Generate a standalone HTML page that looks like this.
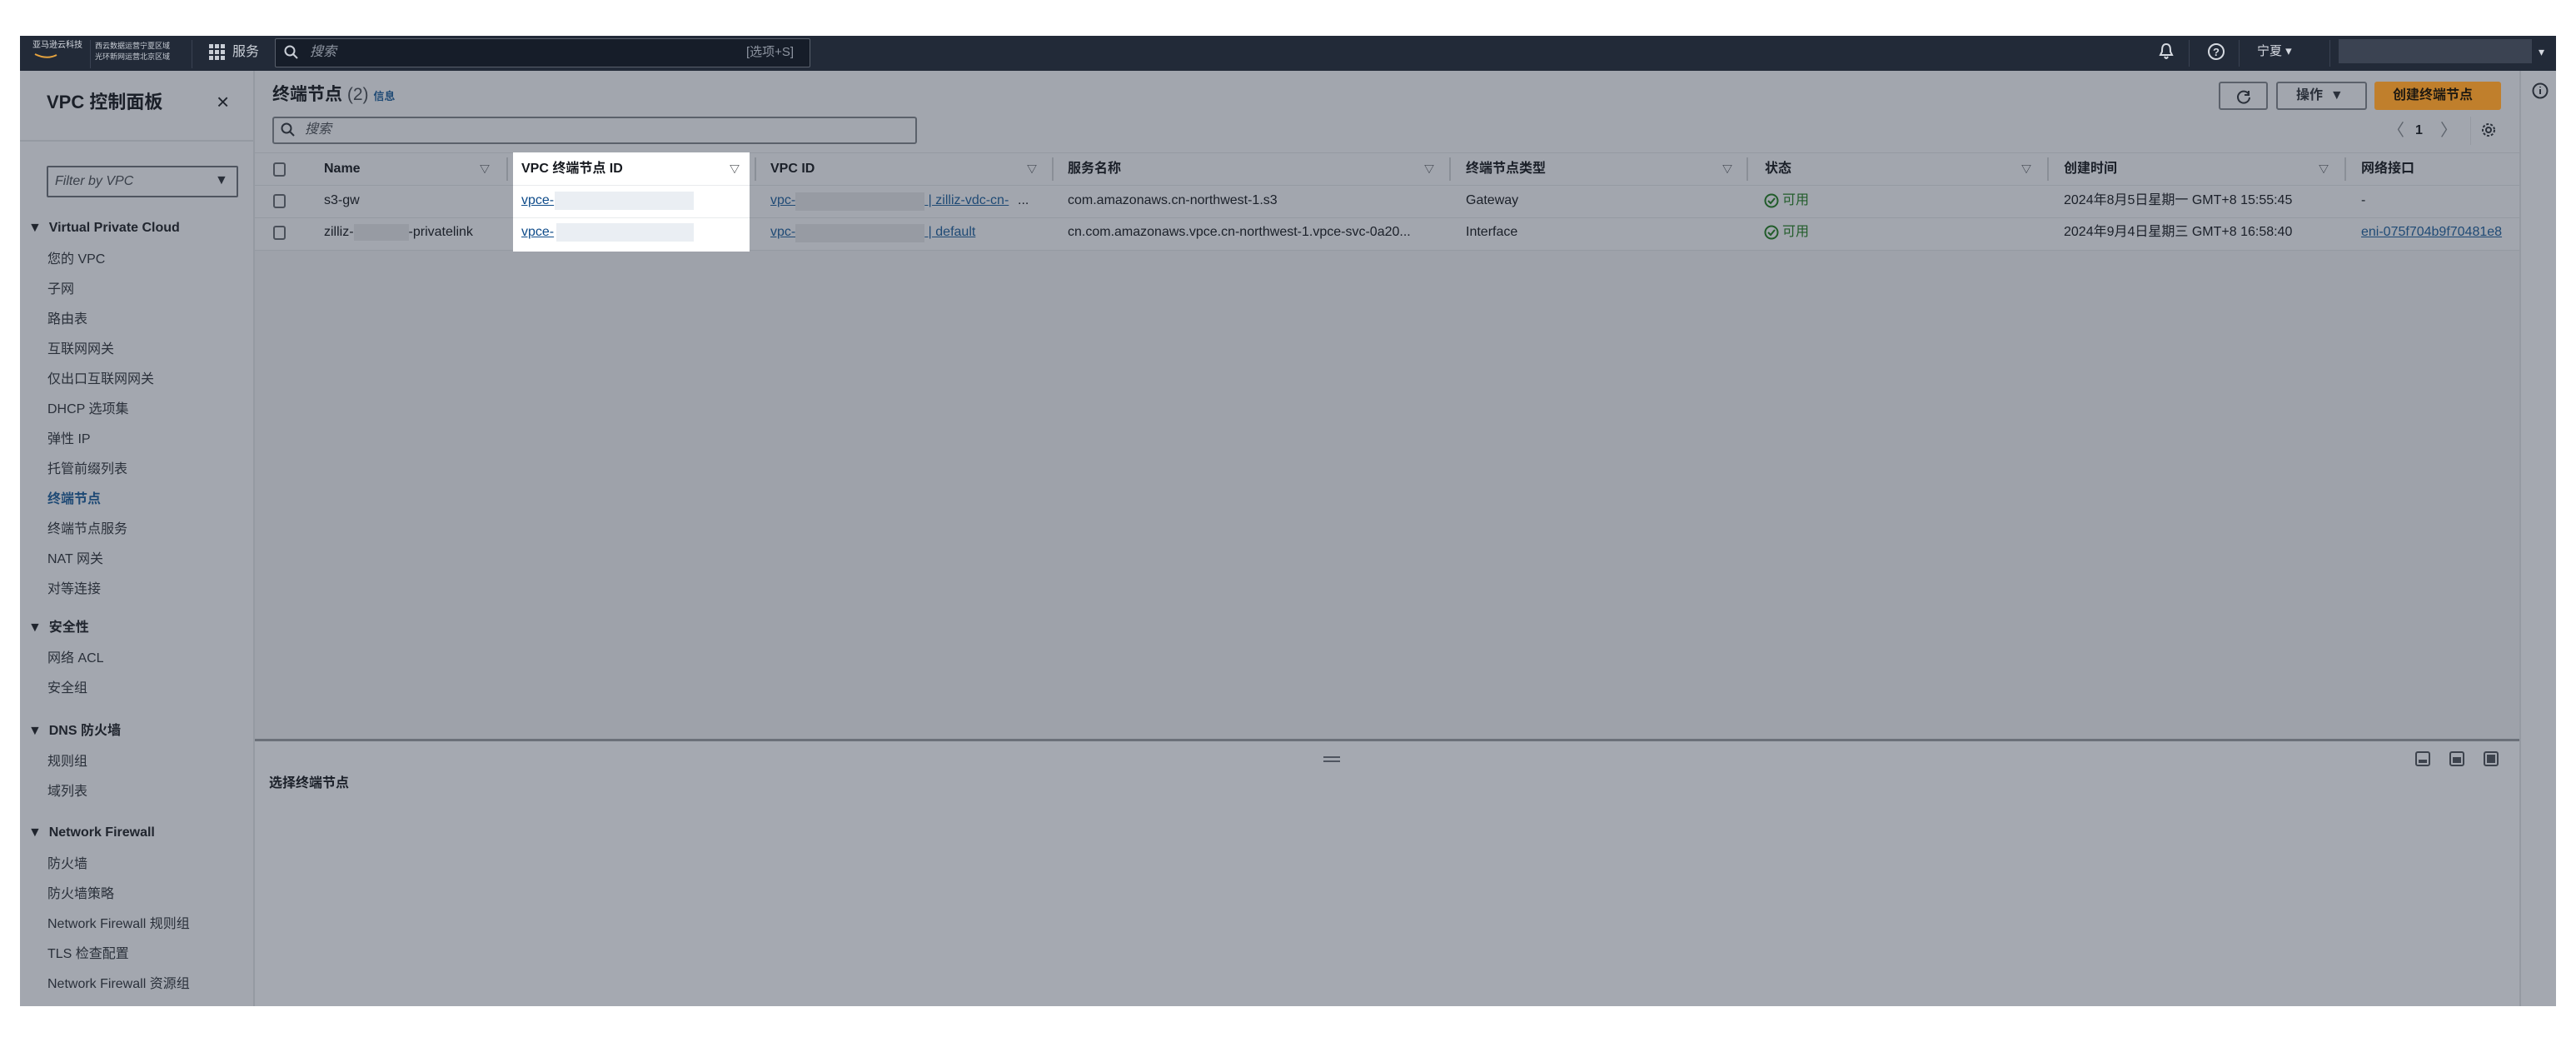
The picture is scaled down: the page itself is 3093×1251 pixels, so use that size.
<!DOCTYPE html>
<html><head><meta charset="utf-8"><style>
*{margin:0;padding:0;box-sizing:border-box}
body{width:3093px;height:1251px;background:#fff;position:relative;overflow:hidden;font-family:"Liberation Sans","Noto Sans CJK SC",sans-serif;color:#1b2029;font-size:16px;line-height:20px}
.a{position:absolute;white-space:nowrap;line-height:20px}
.nav{left:24px;top:43px;width:3045px;height:42px;background:#222a38}
.side{left:24px;top:85px;width:282px;height:1123px;background:#a3a7af;border-right:2px solid #959aa2}
.main{left:306px;top:85px;width:2719px;height:805px;background:#a2a6ae}
.empty{left:306px;top:300px;width:2719px;height:588px;background:#9ea2aa}
.split{left:306px;top:887px;width:2719px;height:3px;background:#6b7079}
.bot{left:306px;top:890px;width:2719px;height:318px;background:#a5a9b1}
.rstrip{left:3025px;top:85px;width:44px;height:1123px;background:#a4a8b0;border-left:2px solid #959aa2}
.si{left:57px;font-size:16px;color:#2a303a}
.sh{left:34px;font-size:16px;font-weight:bold;color:#20252e}
.th{font-size:16px;font-weight:bold;top:193px}
.td{font-size:16px}
.lk{color:#1f4a75;text-decoration:underline}
.fi{font-size:12px;top:193px;color:#2a303a}
.dv{width:2px;height:28px;top:189px;background:#8a8f97}
.rl{height:1px;background:#959aa2;left:306px;width:2719px}
.cb{width:15px;height:17px;border:2px solid #4a505a;border-radius:3px;left:328px}
</style></head><body>
<div class="a nav"></div>
<div class="a" style="left:39px;top:49px;color:#d5d9e0;font-size:10px;line-height:12px">亚马逊云科技</div>
<svg class="a" style="left:40px;top:63px" width="36" height="10"><path d="M2 2 Q16 9 28 3" stroke="#e6a33e" stroke-width="2" fill="none"/></svg>
<div class="a" style="left:108px;top:48px;width:1px;height:34px;background:#3a4252"></div>
<div class="a" style="left:114px;top:49px;color:#c7ccd4;font-size:9px;line-height:13px">西云数据运营宁夏区域<br>光环新网运营北京区域</div>
<div class="a" style="left:230px;top:48px;width:1px;height:34px;background:#3a4252"></div>
<svg class="a" style="left:251px;top:53px" width="20" height="20" fill="#c9ced6"><rect x="0" y="0" width="5" height="5"/><rect x="7" y="0" width="5" height="5"/><rect x="14" y="0" width="5" height="5"/><rect x="0" y="7" width="5" height="5"/><rect x="7" y="7" width="5" height="5"/><rect x="14" y="7" width="5" height="5"/><rect x="0" y="14" width="5" height="5"/><rect x="7" y="14" width="5" height="5"/><rect x="14" y="14" width="5" height="5"/></svg>
<div class="a" style="left:279px;top:53px;color:#c9ced6;font-size:16px">服务</div>
<div class="a" style="left:330px;top:46px;width:643px;height:35px;background:#161d29;border:1px solid #59606c;border-radius:2px"></div>
<svg class="a" style="left:341px;top:54px" width="18" height="18"><circle cx="7" cy="7" r="5.5" stroke="#c9ced6" stroke-width="2" fill="none"/><path d="M11 11 L16 16" stroke="#c9ced6" stroke-width="2"/></svg>
<div class="a" style="left:372px;top:53px;color:#8e95a1;font-size:16px;font-style:italic">搜索</div>
<div class="a" style="left:896px;top:53px;color:#8e95a1;font-size:15px">[选项+S]</div>
<svg class="a" style="left:2591px;top:51px" width="20" height="22"><path d="M10 2 C5 2 5 7 5 11 L3 15 L17 15 L15 11 C15 7 15 2 10 2 Z M8 17 Q10 21 12 17" stroke="#d5d9e0" stroke-width="2" fill="none"/></svg>
<div class="a" style="left:2628px;top:48px;width:1px;height:32px;background:#3a4252"></div>
<svg class="a" style="left:2650px;top:51px" width="22" height="22"><circle cx="11" cy="11" r="9" stroke="#d5d9e0" stroke-width="2" fill="none"/><text x="11" y="16" font-size="13" text-anchor="middle" fill="#d5d9e0" font-family="Liberation Sans" font-weight="bold">?</text></svg>
<div class="a" style="left:2688px;top:48px;width:1px;height:32px;background:#3a4252"></div>
<div class="a" style="left:2710px;top:52px;color:#d5d9e0;font-size:15px">宁夏 ▾</div>
<div class="a" style="left:2797px;top:48px;width:1px;height:32px;background:#3a4252"></div>
<div class="a" style="left:2808px;top:47px;width:232px;height:29px;background:#3b4352"></div>
<div class="a" style="left:3048px;top:52px;color:#d5d9e0;font-size:14px">▾</div>

<div class="a side"></div>
<div class="a main"></div>
<div class="a empty"></div>
<div class="a split"></div>
<div class="a bot"></div>
<div class="a rstrip"></div>

<div class="a" style="left:56px;top:110px;font-size:22px;line-height:26px;font-weight:bold;color:#1b2029">VPC 控制面板</div>
<div class="a" style="left:260px;top:108px;font-size:26px;line-height:28px;color:#20252e">×</div>
<div class="a" style="left:24px;top:168px;width:282px;height:2px;background:#959aa2"></div>
<div class="a" style="left:56px;top:199px;width:230px;height:38px;border:2px solid #4f5560;border-radius:2px"></div>
<div class="a" style="left:66px;top:208px;font-size:16px;font-style:italic;color:#3a404a">Filter by VPC</div>
<div class="a" style="left:258px;top:207px;font-size:16px;color:#2a303a">▼</div>
<div class="a sh" style="top:264px">▼&nbsp; Virtual Private Cloud</div>
<div class="a si" style="top:302px">您的 VPC</div>
<div class="a si" style="top:338px">子网</div>
<div class="a si" style="top:374px">路由表</div>
<div class="a si" style="top:410px">互联网网关</div>
<div class="a si" style="top:446px">仅出口互联网网关</div>
<div class="a si" style="top:482px">DHCP 选项集</div>
<div class="a si" style="top:518px">弹性 IP</div>
<div class="a si" style="top:554px">托管前缀列表</div>
<div class="a si" style="top:590px;color:#1f4a75;font-weight:bold">终端节点</div>
<div class="a si" style="top:626px">终端节点服务</div>
<div class="a si" style="top:662px">NAT 网关</div>
<div class="a si" style="top:698px">对等连接</div>
<div class="a sh" style="top:744px">▼&nbsp; 安全性</div>
<div class="a si" style="top:781px">网络 ACL</div>
<div class="a si" style="top:817px">安全组</div>
<div class="a sh" style="top:868px">▼&nbsp; DNS 防火墙</div>
<div class="a si" style="top:905px">规则组</div>
<div class="a si" style="top:941px">域列表</div>
<div class="a sh" style="top:990px">▼&nbsp; Network Firewall</div>
<div class="a si" style="top:1028px">防火墙</div>
<div class="a si" style="top:1064px">防火墙策略</div>
<div class="a si" style="top:1100px">Network Firewall 规则组</div>
<div class="a si" style="top:1136px">TLS 检查配置</div>
<div class="a si" style="top:1172px">Network Firewall 资源组</div>

<div class="a" style="left:327px;top:101px;font-size:21px;line-height:26px;font-weight:bold">终端节点 <span style="font-weight:normal;color:#3a404a">(2)</span> <span style="font-size:13px;color:#1f4a75;font-weight:bold">信息</span></div>
<div class="a" style="left:327px;top:140px;width:774px;height:33px;border:2px solid #5b616b;border-radius:3px"></div>
<svg class="a" style="left:337px;top:147px" width="18" height="18"><circle cx="7" cy="7" r="5.5" stroke="#2a303a" stroke-width="2" fill="none"/><path d="M11 11 L16 16" stroke="#2a303a" stroke-width="2"/></svg>
<div class="a" style="left:366px;top:146px;font-size:16px;font-style:italic;color:#3a404a">搜索</div>

<div class="a" style="left:2664px;top:98px;width:59px;height:34px;border:2px solid #5b616b;border-radius:3px"></div>
<svg class="a" style="left:2683px;top:104px" width="22" height="22"><path d="M17 5 L17 10 L12 10 M17 9 A7 7 0 1 0 18 13" stroke="#2a303a" stroke-width="2" fill="none"/></svg>
<div class="a" style="left:2733px;top:98px;width:109px;height:34px;border:2px solid #5b616b;border-radius:3px"></div>
<div class="a" style="left:2757px;top:105px;font-size:16px;font-weight:bold;color:#2a303a">操作 &nbsp;▼</div>
<div class="a" style="left:2851px;top:98px;width:152px;height:34px;background:#c07f2c;border-radius:3px"></div>
<div class="a" style="left:2873px;top:105px;font-size:16px;font-weight:bold;color:#1f1a12">创建终端节点</div>
<div class="a" style="left:2867px;top:145px;font-size:20px;line-height:24px;color:#5e646d">〈</div>
<div class="a" style="left:2900px;top:147px;font-size:16px;font-weight:bold">1</div>
<div class="a" style="left:2930px;top:145px;font-size:20px;line-height:24px;color:#5e646d">〉</div>
<div class="a" style="left:2966px;top:140px;width:1px;height:34px;background:#959aa2"></div>
<svg class="a" style="left:2978px;top:146px" width="20" height="20"><circle cx="10" cy="10" r="7" stroke="#2a303a" stroke-width="2" fill="none" stroke-dasharray="3 2"/><circle cx="10" cy="10" r="3" stroke="#2a303a" stroke-width="2" fill="none"/></svg>
<svg class="a" style="left:3039px;top:98px" width="22" height="22"><circle cx="11" cy="11" r="8.5" stroke="#2a303a" stroke-width="2" fill="none"/><path d="M11 9 L11 15 M11 6 L11 7" stroke="#2a303a" stroke-width="2"/></svg>

<div class="a rl" style="top:183px"></div>
<div class="a rl" style="top:222px"></div>
<div class="a rl" style="top:261px"></div>
<div class="a rl" style="top:300px"></div>
<div class="a" style="left:616px;top:183px;width:284px;height:119px;background:#fff"></div>
<div class="a" style="left:616px;top:222px;width:284px;height:1px;background:#e9ebed"></div>
<div class="a" style="left:616px;top:261px;width:284px;height:1px;background:#e9ebed"></div>

<div class="a cb" style="top:195px"></div>
<div class="a cb" style="top:233px"></div>
<div class="a cb" style="top:271px"></div>
<div class="a th" style="left:389px">Name</div><div class="a fi" style="left:576px">▽</div><div class="a dv" style="left:608px"></div>
<div class="a th" style="left:626px;color:#16191f">VPC 终端节点 ID</div><div class="a fi" style="left:876px;color:#16191f">▽</div><div class="a dv" style="left:906px"></div>
<div class="a th" style="left:925px">VPC ID</div><div class="a fi" style="left:1233px">▽</div><div class="a dv" style="left:1263px"></div>
<div class="a th" style="left:1282px">服务名称</div><div class="a fi" style="left:1710px">▽</div><div class="a dv" style="left:1740px"></div>
<div class="a th" style="left:1760px">终端节点类型</div><div class="a fi" style="left:2068px">▽</div><div class="a dv" style="left:2097px"></div>
<div class="a th" style="left:2119px">状态</div><div class="a fi" style="left:2427px">▽</div><div class="a dv" style="left:2458px"></div>
<div class="a th" style="left:2478px">创建时间</div><div class="a fi" style="left:2784px">▽</div><div class="a dv" style="left:2815px"></div>
<div class="a th" style="left:2835px">网络接口</div>

<div class="a td" style="left:389px;top:231px">s3-gw</div>
<div class="a td" style="left:389px;top:269px">zilliz-<span style="display:inline-block;width:66px;height:20px;background:#979ba3;vertical-align:top"></span>-privatelink</div>
<div class="a td lk" style="left:626px;top:231px;color:#0f4c8a">vpce-</div>
<div class="a" style="left:666px;top:230px;width:167px;height:22px;background:#eaeef3"></div>
<div class="a td lk" style="left:626px;top:269px;color:#0f4c8a">vpce-</div>
<div class="a" style="left:668px;top:268px;width:165px;height:22px;background:#eaeef3"></div>
<div class="a td lk" style="left:925px;top:231px">vpc-<span style="display:inline-block;width:155px;height:22px;background:#979ba3;vertical-align:top"></span> | zilliz-vdc-cn-</div><div class="a td" style="left:1222px;top:231px">...</div>
<div class="a td lk" style="left:925px;top:269px">vpc-<span style="display:inline-block;width:155px;height:22px;background:#979ba3;vertical-align:top"></span> | default</div>
<div class="a td" style="left:1282px;top:231px">com.amazonaws.cn-northwest-1.s3</div>
<div class="a td" style="left:1282px;top:269px">cn.com.amazonaws.vpce.cn-northwest-1.vpce-svc-0a20...</div>
<div class="a td" style="left:1760px;top:231px">Gateway</div>
<div class="a td" style="left:1760px;top:269px">Interface</div>
<svg class="a" style="left:2118px;top:232px" width="18" height="18"><circle cx="9" cy="9" r="7.5" stroke="#215c2a" stroke-width="2" fill="none"/><path d="M5 9 L8 12 L13 6" stroke="#215c2a" stroke-width="2" fill="none"/></svg>
<div class="a td" style="left:2140px;top:231px;color:#215c2a">可用</div>
<svg class="a" style="left:2118px;top:270px" width="18" height="18"><circle cx="9" cy="9" r="7.5" stroke="#215c2a" stroke-width="2" fill="none"/><path d="M5 9 L8 12 L13 6" stroke="#215c2a" stroke-width="2" fill="none"/></svg>
<div class="a td" style="left:2140px;top:269px;color:#215c2a">可用</div>
<div class="a td" style="left:2478px;top:231px">2024年8月5日星期一 GMT+8 15:55:45</div>
<div class="a td" style="left:2478px;top:269px">2024年9月4日星期三 GMT+8 16:58:40</div>
<div class="a td" style="left:2835px;top:231px">-</div>
<div class="a td lk" style="left:2835px;top:269px;width:190px;overflow:hidden">eni-075f704b9f70481e8</div>

<div class="a" style="left:1589px;top:908px;width:20px;height:2px;background:#4f5560"></div>
<div class="a" style="left:1589px;top:913px;width:20px;height:2px;background:#4f5560"></div>
<div class="a" style="left:323px;top:931px;font-size:16px;font-weight:bold">选择终端节点</div>
<svg class="a" style="left:2900px;top:902px" width="18" height="18"><rect x="1" y="1" width="16" height="16" rx="2" stroke="#3d434d" stroke-width="2" fill="none"/><rect x="4" y="10" width="10" height="4" fill="#3d434d"/></svg>
<svg class="a" style="left:2941px;top:902px" width="18" height="18"><rect x="1" y="1" width="16" height="16" rx="2" stroke="#3d434d" stroke-width="2" fill="none"/><rect x="4" y="7" width="10" height="7" fill="#3d434d"/></svg>
<svg class="a" style="left:2982px;top:902px" width="18" height="18"><rect x="1" y="1" width="16" height="16" rx="2" stroke="#3d434d" stroke-width="2" fill="none"/><rect x="4" y="4" width="10" height="10" fill="#3d434d"/></svg>
</body></html>
